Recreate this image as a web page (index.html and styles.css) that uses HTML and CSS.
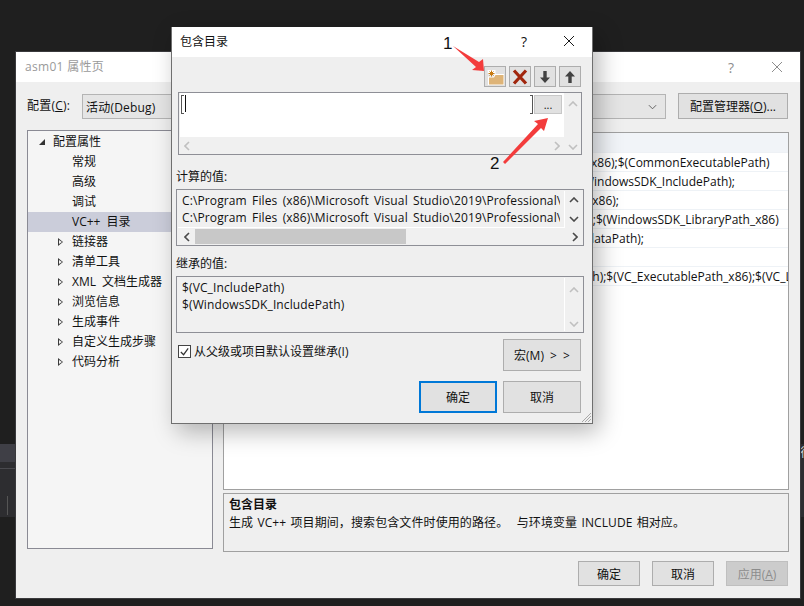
FILE: index.html
```html
<!DOCTYPE html>
<html lang="zh">
<head>
<meta charset="utf-8">
<title>包含目录</title>
<link rel="stylesheet" href="styles.css">
</head>
<body>
<div class="desktop">
  <div class="ide-band ide-left">
    <div class="band-tab"></div>
    <div class="band-dots"></div>
    <div class="band-rule"></div>
  </div>
  <div class="ide-band ide-right"><span class="band-glyph">行</span></div>

  <section class="window props">
    <header class="titlebar props-title">
      <span class="title-text">asm01 属性页</span>
      <span class="title-tools">
        <span class="help">?</span>
        <svg class="close" viewBox="0 0 12 12"><path d="M1 1l10 10M11 1L1 11"/></svg>
      </span>
    </header>
    <div class="config-row">
      <label class="config-label">配置(<u>C</u>):</label>
      <div class="combo combo-config">活动(Debug)</div>
      <div class="combo combo-platform">
        <svg class="chev" viewBox="0 0 10 6"><path d="M1 1l4 4 4-4"/></svg>
      </div>
      <button class="btn btn-manager">配置管理器(<u>O</u>)...</button>
    </div>
    <div class="main-row">
      <nav class="tree">
        <div class="node root"><i class="tw open"></i>配置属性</div>
        <div class="node"><i class="tw"></i>常规</div>
        <div class="node"><i class="tw"></i>高级</div>
        <div class="node"><i class="tw"></i>调试</div>
        <div class="node selected"><i class="tw"></i>VC++ 目录</div>
        <div class="node"><i class="tw closed"></i>链接器</div>
        <div class="node"><i class="tw closed"></i>清单工具</div>
        <div class="node"><i class="tw closed"></i>XML 文档生成器</div>
        <div class="node"><i class="tw closed"></i>浏览信息</div>
        <div class="node"><i class="tw closed"></i>生成事件</div>
        <div class="node"><i class="tw closed"></i>自定义生成步骤</div>
        <div class="node"><i class="tw closed"></i>代码分析</div>
      </nav>
      <div class="detail">
        <div class="grid">
          <div class="grid-head">常规</div>
          <div class="grid-row"><span class="key">可执行文件目录</span><span class="val">$(VC_ExecutablePath_x86);$(CommonExecutablePath)</span></div>
          <div class="grid-row"><span class="key">包含目录</span><span class="val">$(VC_IncludePath);$(WindowsSDK_IncludePath);</span></div>
          <div class="grid-row"><span class="key">引用目录</span><span class="val">$(VC_ReferencesPath_x86);</span></div>
          <div class="grid-row"><span class="key">库目录</span><span class="val">$(VC_LibraryPath_x86);$(WindowsSDK_LibraryPath_x86)</span></div>
          <div class="grid-row"><span class="key">Windows 运行库目录</span><span class="val">$(WindowsSDK_MetadataPath);</span></div>
          <div class="grid-row"><span class="key">源目录</span><span class="val">$(VC_SourcePath);</span></div>
          <div class="grid-row"><span class="key">排除目录</span><span class="val">$(CommonExcludePath);$(VC_ExecutablePath_x86);$(VC_LibraryPath_x86)</span></div>
        </div>
        <div class="desc">
          <strong>包含目录</strong>
          <p>生成 VC++ 项目期间，搜索包含文件时使用的路径。&nbsp; 与环境变量 INCLUDE 相对应。</p>
        </div>
      </div>
    </div>
    <footer class="foot">
      <button class="btn btn-foot">确定</button>
      <button class="btn btn-foot">取消</button>
      <button class="btn btn-foot disabled">应用(<u>A</u>)</button>
    </footer>
  </section>

  <section class="window dialog">
    <header class="titlebar dlg-title">
      <span class="dlg-title-text">包含目录</span>
      <span class="title-tools">
        <span class="help">?</span>
        <svg class="close" viewBox="0 0 12 12"><path d="M1 1l10 10M11 1L1 11"/></svg>
      </span>
    </header>
    <div class="dlg-body">
      <div class="toolbar">
        <button class="tool">
          <svg viewBox="0 0 18 16" width="18" height="16">
            <path fill="#fff" d="M1.500 1h8v4.500H2z"/>
            <path fill="#fff" d="M2 7.500h5.500L9 5h9v11H2z"/>
            <path fill="#deb478" d="M3 8.500h5l1.500-2.500h8v9.500H3z"/>
            <path stroke="#c77a10" stroke-width="1" fill="none" d="M5.500 1.500v6M2.500 4.500h6M3.500 2.500l4 4M7.500 2.500l-4 4"/>
          </svg>
        </button>
        <button class="tool">
          <svg viewBox="0 0 16 16" width="16" height="16"><path stroke="#a1260d" stroke-width="3.200" fill="none" d="M2 1.500l12 13M14 1.500l-12 13"/></svg>
        </button>
        <button class="tool">
          <svg viewBox="0 0 12 14" width="12" height="14"><path fill="#424242" d="M4.300 1h3.400v6.500H11L6 13 1 7.500h3.300z"/></svg>
        </button>
        <button class="tool">
          <svg viewBox="0 0 12 14" width="12" height="14"><path fill="#424242" d="M6 1l5 5.500H7.700V13H4.300V6.500H1z"/></svg>
        </button>
      </div>

      <div class="editbox">
        <div class="edit-main">
          <div class="edit-area">
            <div class="edit-line"><span class="caret"></span></div>
            <button class="browse">...</button>
          </div>
          <div class="hscroll faint">
            <svg class="arr" viewBox="0 0 6 10"><path d="M5 1L1 5l4 4"/></svg>
            <span class="track"></span>
            <svg class="arr" viewBox="0 0 6 10"><path d="M1 1l4 4-4 4"/></svg>
          </div>
        </div>
        <div class="vscroll faint">
          <svg class="arr-v" viewBox="0 0 10 6"><path d="M1 5l4-4 4 4"/></svg>
          <svg class="arr-v" viewBox="0 0 10 6"><path d="M1 1l4 4 4-4"/></svg>
        </div>
      </div>

      <div class="group-label calc-label">计算的值:</div>
      <div class="listbox calc">
        <div class="list-main">
          <div class="list-text">
            <div class="list-line">C:\Program Files (x86)\Microsoft Visual Studio\2019\Professional\VC\Tools\MSVC</div>
            <div class="list-line">C:\Program Files (x86)\Microsoft Visual Studio\2019\Professional\VC\Tools\MSVC</div>
          </div>
          <div class="vscroll">
            <svg class="arr-v" viewBox="0 0 10 6"><path d="M1 5l4-4 4 4"/></svg>
            <svg class="arr-v" viewBox="0 0 10 6"><path d="M1 1l4 4 4-4"/></svg>
          </div>
        </div>
        <div class="hscroll">
          <svg class="arr" viewBox="0 0 6 10"><path d="M5 1L1 5l4 4"/></svg>
          <span class="track"><span class="thumb"></span></span>
          <svg class="arr" viewBox="0 0 6 10"><path d="M1 1l4 4-4 4"/></svg>
        </div>
      </div>

      <div class="group-label inh-label">继承的值:</div>
      <div class="listbox inh">
        <div class="list-main full">
          <div class="list-text">
            <div class="list-line">$(VC_IncludePath)</div>
            <div class="list-line">$(WindowsSDK_IncludePath)</div>
          </div>
          <div class="vscroll faint tall">
            <svg class="arr-v" viewBox="0 0 10 6"><path d="M1 5l4-4 4 4"/></svg>
            <svg class="arr-v" viewBox="0 0 10 6"><path d="M1 1l4 4 4-4"/></svg>
          </div>
        </div>
      </div>

      <div class="inherit-row">
        <label class="check">
          <span class="box"><svg viewBox="0 0 12 12"><path d="M2 6.500l3 3 5-7"/></svg></span>
          从父级或项目默认设置继承(I)
        </label>
        <button class="btn btn-macro">宏(M) &gt; &gt;</button>
      </div>
      <div class="dlg-actions">
        <button class="btn btn-dlg primary">确定</button>
        <button class="btn btn-dlg">取消</button>
      </div>
    </div>
    <svg class="grip" viewBox="0 0 11 11"><path d="M10 1L1 10M10 4L4 10M10 7L7 10"/></svg>
  </section>

  <svg class="callouts" width="804" height="606" viewBox="0 0 804 606">
    <path fill="#f33c3c" d="M453 46l26 16 4-3 1 12-12-1 4-3z"/>
    <path fill="#f33c3c" d="M503 162l35-38-4-3 14-3-4 13-3-3-36 36z"/>
  </svg>
  <span class="callout-num num1">1</span>
  <span class="callout-num num2">2</span>
</div>
</body>
</html>
```

FILE: styles.css
```css
* { box-sizing: border-box; }
html, body { margin: 0; padding: 0; }
body {
  width: 804px;
  height: 606px;
  overflow: hidden;
  font-family: "Open Sans", "Noto Sans CJK SC", sans-serif;
  font-size: 12px;
  word-spacing: 3px;
  color: #111;
}
button { font: inherit; color: inherit; word-spacing: inherit; margin: 0; padding: 0; }
u { text-underline-offset: 1px; }

.desktop {
  position: relative;
  width: 804px;
  height: 606px;
  background: #1f1f1f;
  overflow: hidden;
}

/* IDE behind */
.ide-band { position: absolute; top: 444px; height: 73px; background: #2d2d30; }
.ide-left { left: 0; width: 16px; }
.band-tab { height: 18px; background: #3f3f46; }
.band-dots { margin-top: 6px; height: 18px; border-top: 1px solid #4a4a4f; }
.band-rule { position: absolute; left: 7px; top: 52px; width: 1px; height: 19px; background: #555; }
.ide-right { left: 800px; width: 4px; color: #c8d2dc; overflow: hidden; line-height: 18px; }
.band-glyph { display: block; }

/* windows */
.window { position: absolute; background: #efefef; display: flex; flex-direction: column; }
.titlebar { display: flex; align-items: center; justify-content: space-between; background: #fff; flex: none; height: 30px; }
.title-tools { display: flex; align-items: center; }
.help { font-size: 14px; width: 12px; text-align: center; }
.close { width: 12px; height: 12px; fill: none; stroke: #1a1a1a; stroke-width: 1; }

.props {
  left: 15px; top: 51px; width: 786px; height: 548px;
  border: 1px solid #3a3a3d;
}
.props-title { padding-left: 9px; color: #9a9a9a; }
.props-title .title-tools { gap: 34px; margin-right: 17px; }
.props-title .help { color: #8d8d8d; }
.props-title .close { stroke: #8d8d8d; }
.title-text { letter-spacing: .3px; word-spacing: 0; padding-bottom: 3px; }

.config-row { display: flex; align-items: flex-start; padding: 12px 0 0 11px; height: 48px; }
.config-label { width: 55px; line-height: 24px; letter-spacing: .2px; }
.combo { height: 25px; background: #e5e5e5; border: 1px solid #b4b4b4; display: flex; align-items: center; letter-spacing: .2px; }
.combo-config { width: 330px; padding-left: 3px; }
.combo-platform { width: 255px; margin-left: -1px; justify-content: flex-end; padding-right: 8px; }
.chev { width: 9px; height: 6px; fill: none; stroke: #555; stroke-width: 1; }
.btn { background: #e1e1e1; border: 1px solid #adadad; cursor: default; }
.btn-manager { width: 110px; height: 26px; margin-left: 12px; margin-top: -1px; }

.main-row { display: flex; align-items: flex-start; padding-left: 11px; gap: 10px; flex: none; height: 421px; }
.tree {
  width: 186px; height: 419px;
  background: #f5f5f5;
  border: 1px solid #8a8a94;
  padding-top: 1px;
}
.node { height: 20px; line-height: 20px; display: flex; align-items: center; padding-left: 44px; position: relative; white-space: nowrap; }
.node.root { padding-left: 25px; }
.node.selected { background: #cbcdda; margin-right: -1px; }
.tw { position: absolute; left: 30px; top: 6px; width: 0; height: 0; }
.tw.closed { border-left: 5px solid #3a3a3a; border-top: 4.500px solid transparent; border-bottom: 4.500px solid transparent; }
.tw.closed::after {
  content: ""; position: absolute; left: -4px; top: -2.500px;
  border-left: 3px solid #f5f5f5; border-top: 2.500px solid transparent; border-bottom: 2.500px solid transparent;
}
.tw.open { left: 11px; top: 7px; border-bottom: 6px solid #333; border-left: 6px solid transparent; }

.detail { width: 566px; display: flex; flex-direction: column; gap: 3px; margin-top: 2px; }
.grid { height: 358px; background: #fff; border: 1px solid #a0a0a0; }
.grid-head { height: 20px; background: #f1f4f8; line-height: 20px; padding-left: 6px; font-weight: 700; border-bottom: 1px solid #eef1f5; color: #444; }
.grid-row { display: flex; height: 19px; line-height: 20px; border-bottom: 1px solid #eef2f6; white-space: nowrap; overflow: hidden; word-spacing: 0; }
.key { width: 245px; padding-left: 16px; flex: none; }
.val { flex: 1; overflow: hidden; }
.desc { height: 59px; background: #efefef; border: 1px solid #a0a0a0; padding: 2px 5px; }
.desc strong { display: block; line-height: 18px; }
.desc p { margin: 0; line-height: 18px; white-space: nowrap; word-spacing: 1px; letter-spacing: .1px; }

.foot { display: flex; justify-content: flex-end; gap: 12px; padding: 10px 12px 0 0; }
.btn-foot { width: 62px; height: 25px; }
.btn.disabled { background: #cccccc; color: #8c8c8c; border-color: #bfbfbf; }

/* dialog */
.dialog {
  left: 171px; top: 27px; width: 422px; height: 397px;
  border: 1px solid #6f6f6f;
  border-top: 0;
  box-shadow: 6px 8px 22px rgba(0,0,0,.28);
}
.dlg-title { padding-left: 8px; }
.dlg-title-text { padding-bottom: 3px; }
.dlg-title .title-tools { gap: 33px; margin-right: 17px; padding-bottom: 2px; }
.dlg-body { flex: 1; display: flex; flex-direction: column; padding: 9px 11px 0 4px; }
.toolbar { display: flex; justify-content: flex-end; gap: 3px; height: 26px; }
.tool { width: 22px; height: 21px; background: #e1e1e1; border: 1px solid #adadad; display: flex; align-items: center; justify-content: center; }
.tool svg { display: block; }

.editbox {
  display: grid; grid-template-columns: 1fr 17px;
  width: 404px; height: 63px; margin-left: 2px;
  border: 1px solid #8e8f96;
  background: #efefef;
  padding-left: 1px;
}
.edit-main { display: flex; flex-direction: column; min-width: 0; }
.edit-area { height: 44px; background: #fff; display: flex; align-items: flex-start; padding: 1px 2px 0 1px; justify-content: space-between; }
.edit-line {
  flex: 1; height: 19px;
  border-left: 1px solid #555; border-right: 1px solid #555;
  position: relative;
  margin-top: 1px;
}
.edit-line::before, .edit-line::after {
  content: ""; position: absolute; top: 0; bottom: 0; width: 2px;
  border-top: 1px solid #555; border-bottom: 1px solid #555;
}
.edit-line::before { left: 0; }
.edit-line::after { right: 0; }
.caret { position: absolute; left: 3px; top: 0; width: 1px; height: 17px; background: #111; }
.browse { width: 28px; height: 19px; margin: 1px 0 0 1px; background: #e1e1e1; border: 1px solid #c8c8c8; line-height: 14px; flex: none; font-size: 11px; }
.hscroll { display: flex; align-items: center; height: 17px; background: #f0f0f0; padding: 0 4px; }
.hscroll .track { flex: 1; height: 100%; margin: 0 5px; display: block; }
.thumb { display: block; width: 211px; height: 15px; margin: 1px 0; background: #c8c8c8; }
.arr { width: 6px; height: 10px; fill: none; stroke: #4a4a4a; stroke-width: 1.600; flex: none; }
.vscroll { display: flex; flex-direction: column; align-items: center; justify-content: space-between; width: 17px; background: #f0f0f0; padding: 8px 0 4px; }
.arr-v { width: 10px; height: 6px; fill: none; stroke: #4a4a4a; stroke-width: 1.600; }
.faint .arr, .faint .arr-v { stroke: #c0c0c0; }

.group-label { line-height: 16px; }
.calc-label { margin-top: 14px; }
.inh-label { margin-top: 10px; }
.listbox { width: 408px; height: 57px; border: 1px solid #8e8f96; margin-top: 4px; display: flex; flex-direction: column; background: #f0f0f0; padding: 1px; flex: none; }
.list-main { display: flex; height: 37px; flex: none; }
.list-main.full { height: 53px; }
.list-text { flex: 1; min-width: 0; background: #f0f0f0; padding: 1px 4px 0 4px; overflow: hidden; border-right: 1px solid #fff; border-bottom: 1px solid #fff; }
.inh .list-text { border-bottom: 0; }
.list-line { height: 17px; line-height: 17px; white-space: nowrap; overflow: hidden; letter-spacing: .12px; word-spacing: 2px; }
.calc .vscroll { padding: 6px 0 6px; }
.tall { padding: 9px 0 4px; }
.calc .hscroll { padding: 0 4px 0 6px; height: 17px; }

.inherit-row { display: flex; justify-content: space-between; align-items: flex-start; margin-top: 6px; }
.check { display: flex; align-items: center; gap: 3px; height: 13px; margin: 6px 0 0 2px; line-height: 13px; white-space: nowrap; word-spacing: 0; }
.box { width: 13px; height: 13px; background: #fff; border: 1px solid #444; display: block; flex: none; }
.box svg { display: block; width: 11px; height: 11px; fill: none; stroke: #333; stroke-width: 1.300; }
.btn-macro { width: 78px; height: 32px; }
.dlg-actions { display: flex; justify-content: flex-end; gap: 6px; margin-top: 10px; }
.btn-dlg { width: 78px; height: 32px; }
.btn-dlg.primary { border: 2px solid #0078d7; }
.grip { position: absolute; right: 0; bottom: 0; width: 11px; height: 11px; fill: none; stroke: #a8a8a8; stroke-width: 1; }

/* annotations */
.callouts { position: absolute; left: 0; top: 0; pointer-events: none; }
.callout-num { position: absolute; font-family: "Liberation Sans", sans-serif; font-size: 17px; line-height: 18px; color: #111; }
.num1 { left: 443px; top: 35px; }
.num2 { left: 490px; top: 155px; }
```
